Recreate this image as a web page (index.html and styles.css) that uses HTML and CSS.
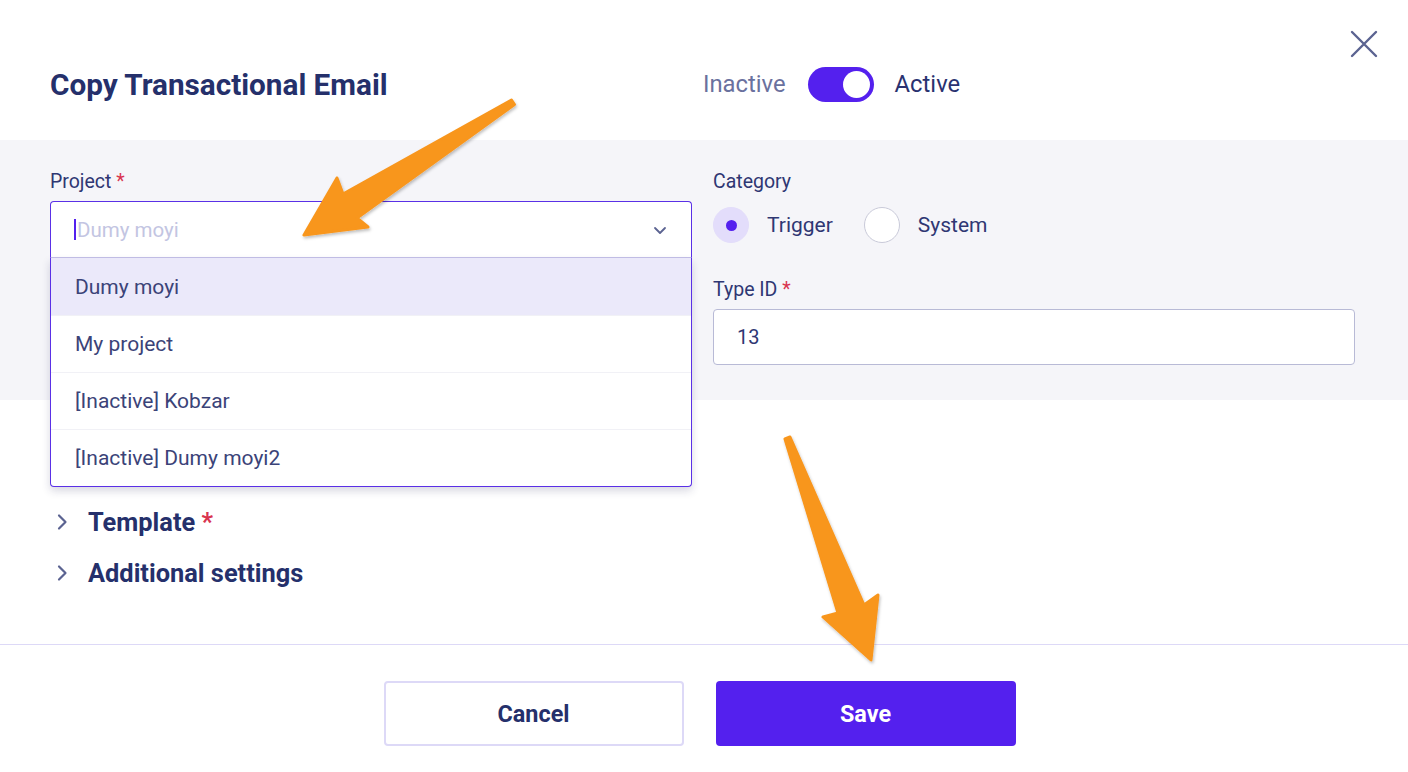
FILE: index.html
```html
<!DOCTYPE html>
<html lang="en">
<head>
<meta charset="utf-8">
<title>Copy Transactional Email</title>
<link rel="stylesheet" href="styles.css">
</head>
<body>
<div class="modal">
  <header class="modal-header">
    <div class="title-wrap"><h1 class="title">Copy Transactional Email</h1></div>
    <div class="status">
      <span class="status-off">Inactive</span>
      <span class="switch"><span class="knob"></span></span>
      <span class="status-on">Active</span>
    </div>
    <button class="close" aria-label="Close">
      <svg width="28" height="28" viewBox="0 0 28 28"><path d="M2 2 L26 26 M26 2 L2 26" stroke="#5b6391" stroke-width="2.4" stroke-linecap="round" fill="none"/></svg>
    </button>
  </header>

  <section class="form-area">
    <div class="col">
      <div class="field">
        <label class="label">Project <span class="req">*</span></label>
        <div class="select-wrap">
          <div class="select">
            <span class="caret"></span>
            <span class="placeholder">Dumy moyi</span>
            <svg class="chev-down" width="14" height="9" viewBox="0 0 14 9"><path d="M2 2 L7 7 L12 2" stroke="#5b6391" stroke-width="1.8" fill="none" stroke-linecap="round" stroke-linejoin="round"/></svg>
          </div>
          <ul class="menu">
            <li class="opt active">Dumy moyi</li>
            <li class="opt">My project</li>
            <li class="opt">[Inactive] Kobzar</li>
            <li class="opt">[Inactive] Dumy moyi2</li>
          </ul>
        </div>
      </div>
    </div>
    <div class="col col-right">
      <div class="field">
        <label class="label">Category</label>
        <div class="radios">
          <span class="radio checked"><span class="dot"></span></span>
          <span class="radio-label">Trigger</span>
          <span class="radio"></span>
          <span class="radio-label">System</span>
        </div>
      </div>
      <div class="field">
        <label class="label">Type ID <span class="req">*</span></label>
        <div class="input">13</div>
      </div>
    </div>
  </section>

  <section class="accordions">
    <div class="acc-row">
      <svg class="chev-right" width="12" height="18" viewBox="0 0 12 18"><path d="M3 2.5 L9.5 9 L3 15.5" stroke="#5b6391" stroke-width="2.2" fill="none" stroke-linecap="round" stroke-linejoin="round"/></svg>
      <span class="acc-title">Template <span class="req">*</span></span>
    </div>
    <div class="acc-row">
      <svg class="chev-right" width="12" height="18" viewBox="0 0 12 18"><path d="M3 2.5 L9.5 9 L3 15.5" stroke="#5b6391" stroke-width="2.2" fill="none" stroke-linecap="round" stroke-linejoin="round"/></svg>
      <span class="acc-title">Additional settings</span>
    </div>
  </section>

  <footer class="modal-footer">
    <button class="btn btn-cancel">Cancel</button>
    <button class="btn btn-save">Save</button>
  </footer>

  <svg class="arrows" width="1408" height="772" viewBox="0 0 1408 772">
    <defs>
      <filter id="sh" x="-20%" y="-20%" width="140%" height="140%">
        <feDropShadow dx="1" dy="2" stdDeviation="1.5" flood-color="#000" flood-opacity="0.25"/>
      </filter>
    </defs>
    <path filter="url(#sh)" fill="#f8961e" stroke="#f8961e" stroke-width="3" stroke-linejoin="round"
      d="M511.5 100 L343 194 L337 178 L304 235 L368 227 L357 218 L514.5 104.5 Z"/>
    <path filter="url(#sh)" fill="#f8961e" stroke="#f8961e" stroke-width="3" stroke-linejoin="round"
      d="M785 439 L838 613 L823 617 L871 660 L878 595 L864 605 L790 437 Z"/>
  </svg>
</div>
</body>
</html>
```

FILE: styles.css
```css
* { box-sizing: border-box; }
html, body { margin: 0; padding: 0; }
body {
  font-family: Roboto, "Noto Sans", "Liberation Sans", sans-serif;
  background: #ffffff;
  color: #2a3270;
  width: 1408px;
  height: 772px;
  overflow: hidden;
}
.modal { position: relative; width: 1408px; height: 772px; }

.modal-header {
  height: 140px;
  padding: 28px 0 0 50px;
  display: flex;
  align-items: center;
  position: relative;
}
.title-wrap { flex: 0 0 653px; }
.title {
  margin: 0;
  font-size: 29.7px;
  font-weight: 700;
  color: #25306b;
}
.status { display: flex; align-items: center; font-size: 23.8px; }
.status-off { color: #6a719e; }
.status-on { color: #2a3270; }
.switch {
  width: 66px; height: 35px; border-radius: 18px;
  background: #5420ee;
  margin: 0 21px 0 22px;
  position: relative;
  display: inline-block;
}
.knob {
  position: absolute; right: 4px; top: 4px;
  width: 27px; height: 27px; border-radius: 50%;
  background: #fff;
}
.close {
  position: absolute; right: 30px; top: 30px;
  background: none; border: 0; padding: 0; width: 28px; height: 28px;
}

.form-area {
  background: #f5f5f9;
  height: 260px;
  padding: 31px 53px 0 50px;
  display: grid;
  grid-template-columns: 642px 642px;
  column-gap: 21px;
  align-content: start;
}
.col { display: flex; flex-direction: column; gap: 20px; }
.col-right { gap: 36px; }
.field { display: flex; flex-direction: column; }
.label {
  font-size: 19.5px; line-height: 22px; color: #2f3773;
  margin-bottom: 8px;
}
.req { color: #d9344f; }

.select-wrap { position: relative; }
.select {
  height: 57px;
  background: #fff;
  border: 1px solid #5a30e6;
  border-bottom: 1px solid #c4c0e8;
  border-radius: 4px 4px 0 0;
  display: flex; align-items: center;
  padding: 0 24px 0 23px;
  font-size: 20.5px;
}
.caret { width: 2px; height: 21px; background: #5420ee; margin-right: 1px; }
.placeholder { color: #c3c5e2; flex: 1; }
.chev-down { margin-top: 2px; }

.menu {
  position: absolute; left: 0; right: 0; top: 57px;
  margin: 0; padding: 0; list-style: none;
  background: #fff;
  border: 1px solid #5a30e6; border-top: 0;
  border-radius: 0 0 4px 4px;
  box-shadow: 0 4px 8px rgba(40, 40, 90, 0.18);
  z-index: 5;
  overflow: hidden;
}
.opt {
  height: 57px;
  display: flex; align-items: center;
  padding-left: 24px;
  font-size: 21px;
  color: #3b4378;
  border-top: 1px solid #f1f1f6;
}
.opt:first-child { border-top: 0; }
.opt.active { background: #ebe9fa; }

.radios { display: flex; align-items: center; padding-top: 6px; font-size: 21px; }
.radio {
  width: 36px; height: 36px; border-radius: 50%;
  background: #fff; border: 1px solid #c9cad9;
  display: inline-flex; align-items: center; justify-content: center;
}
.radio.checked { background: #e3ddfb; border-color: #e3ddfb; }
.dot { width: 11px; height: 11px; border-radius: 50%; background: #5420ee; }
.radio-label { margin-left: 18px; margin-right: 31px; color: #2f3773; }

.input {
  height: 56px;
  background: #fff;
  border: 1px solid #b8bad6;
  border-radius: 4px;
  display: flex; align-items: center;
  padding-left: 23px;
  font-size: 20px;
  color: #2f3773;
}

.accordions {
  padding: 96px 0 46px 50px;
  border-bottom: 1px solid #ddd9f7;
}
.acc-row { height: 51px; display: flex; align-items: center; }
.chev-right { margin-left: 6px; margin-right: 20px; }
.acc-title { font-size: 25.4px; font-weight: 700; color: #25306b; }

.modal-footer {
  padding: 36px 9px 0 0;
  display: flex; justify-content: center; gap: 32px;
}
.btn {
  width: 300px; height: 65px;
  border-radius: 4px;
  font-family: inherit;
  font-size: 23.4px; font-weight: 700;
}
.btn-cancel { background: #fff; border: 2px solid #ddd9f7; color: #25306b; }
.btn-save { background: #5420ee; border: 0; color: #fff; }

.arrows { position: absolute; left: 0; top: 0; pointer-events: none; z-index: 10; }
```
